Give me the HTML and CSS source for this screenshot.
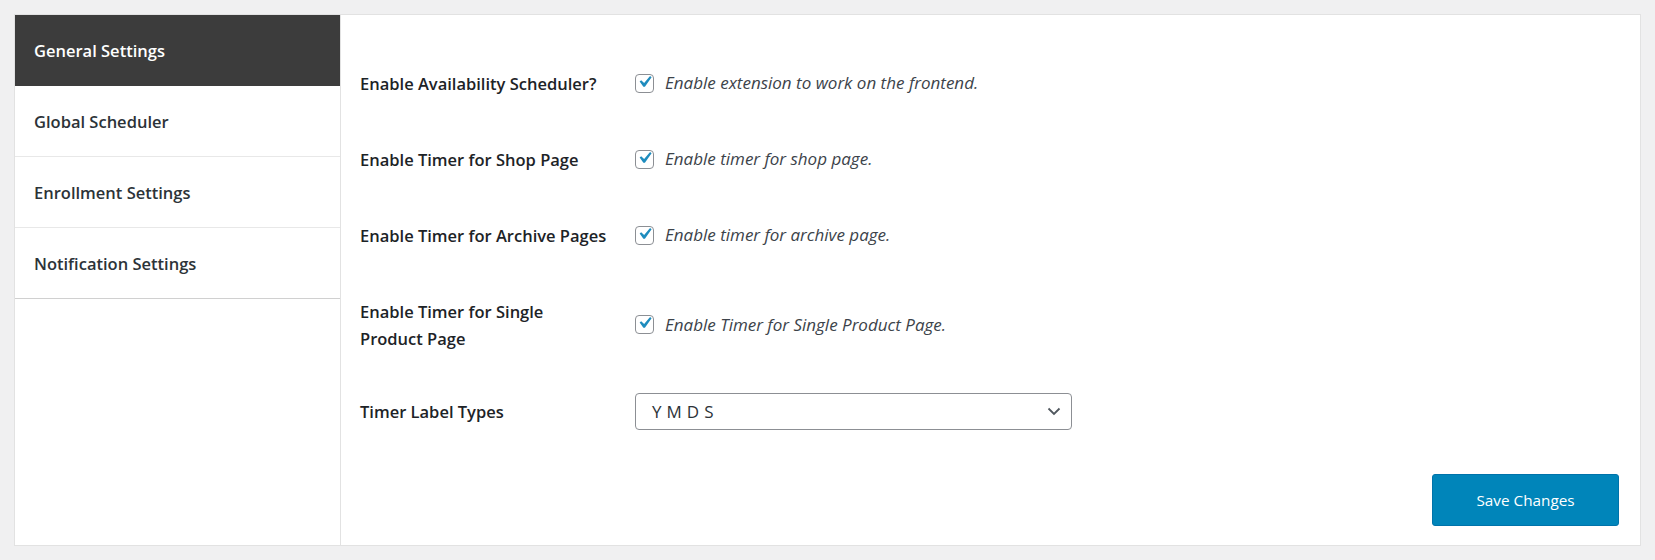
FILE: index.html
```html
<!DOCTYPE html>
<html>
<head>
<meta charset="utf-8">
<link rel="stylesheet" href="styles.css">
</head>
<body>
<div class="panel">
  <nav class="sidebar">
    <div class="nav-item active">General Settings</div>
    <div class="nav-item">Global Scheduler</div>
    <div class="nav-item">Enrollment Settings</div>
    <div class="nav-item last">Notification Settings</div>
  </nav>
  <main class="content">
    <div class="row">
      <div class="label">Enable Availability Scheduler?</div>
      <div class="field">
        <span class="checkbox"><svg viewBox="0 0 20 20"><path d="M14.83 4.89l1.34.94-5.81 8.38H9.02L5.78 9.67l1.34-1.25 2.57 2.4z"/></svg></span>
        <span class="desc">Enable extension to work on the frontend.</span>
      </div>
    </div>
    <div class="row">
      <div class="label">Enable Timer for Shop Page</div>
      <div class="field">
        <span class="checkbox"><svg viewBox="0 0 20 20"><path d="M14.83 4.89l1.34.94-5.81 8.38H9.02L5.78 9.67l1.34-1.25 2.57 2.4z"/></svg></span>
        <span class="desc">Enable timer for shop page.</span>
      </div>
    </div>
    <div class="row">
      <div class="label">Enable Timer for Archive Pages</div>
      <div class="field">
        <span class="checkbox"><svg viewBox="0 0 20 20"><path d="M14.83 4.89l1.34.94-5.81 8.38H9.02L5.78 9.67l1.34-1.25 2.57 2.4z"/></svg></span>
        <span class="desc">Enable timer for archive page.</span>
      </div>
    </div>
    <div class="row">
      <div class="label">Enable Timer for Single<br>Product Page</div>
      <div class="field">
        <span class="checkbox"><svg viewBox="0 0 20 20"><path d="M14.83 4.89l1.34.94-5.81 8.38H9.02L5.78 9.67l1.34-1.25 2.57 2.4z"/></svg></span>
        <span class="desc">Enable Timer for Single Product Page.</span>
      </div>
    </div>
    <div class="row row-select">
      <div class="label">Timer Label Types</div>
      <div class="field">
        <div class="select">
          <span class="select-value">Y M D S</span>
          <svg class="chevron" viewBox="0 0 14 9"><polyline points="1.5,1.5 7,7 12.5,1.5"/></svg>
        </div>
      </div>
    </div>
    <div class="actions">
      <button class="btn-primary">Save Changes</button>
    </div>
  </main>
</div>
</body>
</html>
```

FILE: styles.css
```css
* { box-sizing: border-box; }
html, body { margin: 0; }
body {
  background: #f0f0f1;
  padding: 14px;
  font-family: "Open Sans", "Noto Sans", sans-serif;
  color: #1d2327;
}
.panel {
  width: 1627px;
  height: 532px;
  background: #fff;
  border: 1px solid #e2e2e2;
  display: flex;
}
.sidebar {
  width: 326px;
  flex: none;
  border-right: 1px solid #e2e2e2;
}
.nav-item {
  height: 71px;
  display: flex;
  align-items: center;
  padding-left: 19px;
  font-size: 16.5px;
  font-weight: 600;
  color: #2c3338;
  border-bottom: 1px solid #e8e8e8;
}
.nav-item.active {
  background: #3c3c3c;
  color: #fff;
  border-bottom-color: #3c3c3c;
}
.nav-item.last { border-bottom-color: #d0d0d0; }
.content {
  flex: 1;
  padding: 30px 21px 18px 19px;
  display: flex;
  flex-direction: column;
}
.row {
  display: grid;
  grid-template-columns: 275px 1fr;
  align-items: center;
  padding: 24.5px 0;
}
.row-select { padding: 17px 0 13px; }
.label {
  font-size: 16.5px;
  font-weight: 600;
  line-height: 27px;
  color: #1d2327;
}
.field {
  display: flex;
  align-items: center;
  gap: 11px;
  line-height: 26px;
}
.checkbox {
  width: 19px;
  height: 19px;
  border: 1px solid #8c8f94;
  border-radius: 4px;
  display: flex;
  align-items: center;
  justify-content: center;
  flex: none;
}
.checkbox svg {
  width: 24px;
  height: 24px;
  fill: #1e8cbe;
  margin: -3px -3px 0 -3px;
}
.desc {
  font-style: italic;
  font-size: 17px;
  color: #3c434a;
}
.select {
  width: 437px;
  height: 37px;
  border: 1px solid #8c8f94;
  border-radius: 4px;
  display: flex;
  align-items: center;
  justify-content: space-between;
  padding: 0 10px 0 16px;
}
.select-value {
  font-size: 17px;
  letter-spacing: 0.3px;
  color: #2c3338;
}
.chevron {
  width: 14px;
  height: 9px;
  fill: none;
  stroke: #50575e;
  stroke-width: 1.8;
}
.actions {
  margin-top: 31px;
  display: flex;
  justify-content: flex-end;
}
.btn-primary {
  width: 187px;
  height: 52px;
  background: #0085ba;
  border: 1px solid #0073aa;
  border-radius: 3px;
  color: #fff;
  font-family: "Open Sans", "Noto Sans", sans-serif;
  font-size: 15.3px;
}
```
